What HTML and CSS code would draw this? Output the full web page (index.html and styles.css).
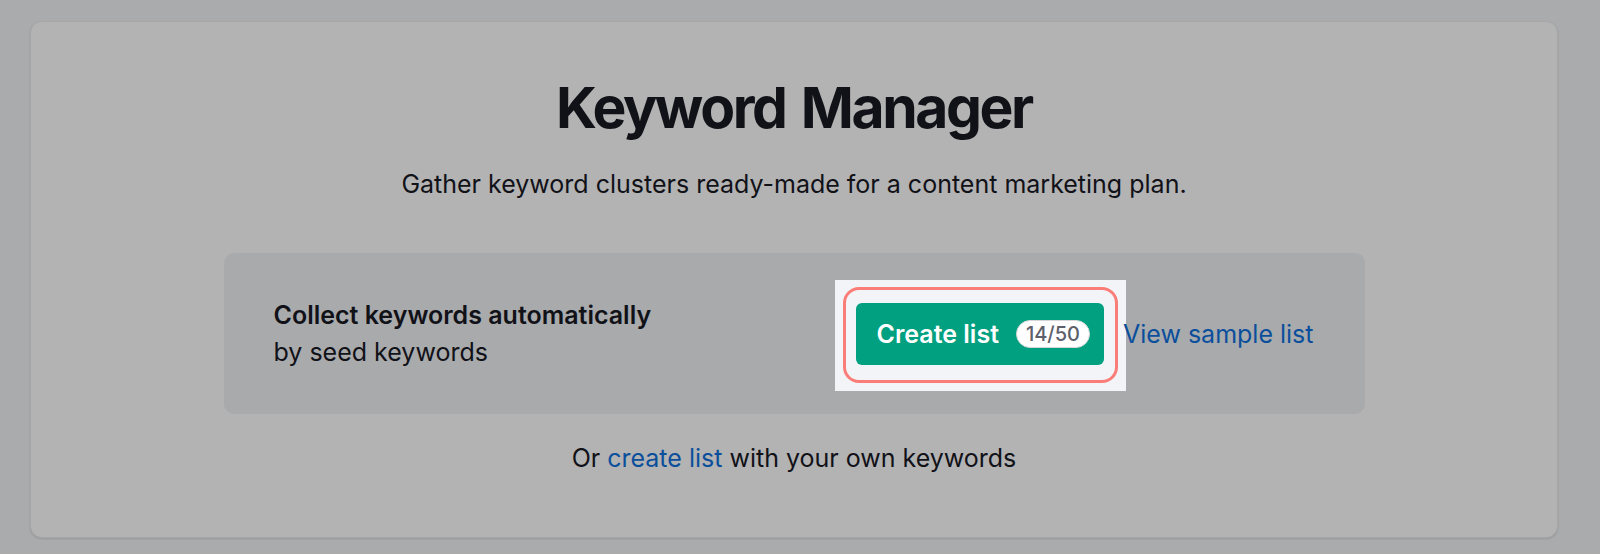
FILE: index.html
```html
<!DOCTYPE html>
<html lang="en">
<head>
<meta charset="utf-8">
<title>Keyword Manager</title>
<link rel="stylesheet" href="styles.css">
</head>
<body>
  <main class="card">
    <h1 class="title">Keyword Manager</h1>
    <p class="subtitle">Gather keyword clusters ready-made for a content marketing plan.</p>
    <section class="panel">
      <div class="panel-text">
        <div class="panel-head">Collect keywords automatically</div>
        <div class="panel-sub">by seed keywords</div>
      </div>
      <div class="panel-actions">
        <div class="annot">
          <button class="btn" type="button">Create list <span class="badge">14/50</span></button>
        </div>
        <a class="link" href="#">View sample list</a>
      </div>
    </section>
    <p class="footer-text">Or <a class="link" href="#">create list</a> with your own keywords</p>
  </main>
</body>
</html>
```

FILE: styles.css
```css
html, body {
  margin: 0;
  padding: 0;
}
body {
  background: #aaabad;
  font-family: Inter, "Noto Sans", "Liberation Sans", sans-serif;
  color: #111118;
  padding: 21px 42px 0 30px;
  height: 554px;
  box-sizing: border-box;
}
.card {
  box-sizing: border-box;
  width: 1528px;
  height: 517px;
  background: #b3b3b3;
  border: 1px solid #a7a7a8;
  border-radius: 12px;
  box-shadow: 0 1px 2px rgba(0, 0, 0, 0.12);
  display: flex;
  flex-direction: column;
  align-items: center;
  padding-top: 50px;
}
.title {
  margin: 0;
  font-size: 57px;
  line-height: 72px;
  font-weight: 700;
  letter-spacing: -2.4px;
  word-spacing: 4px;
  color: #111118;
}
.subtitle {
  margin: 22px 0 0;
  font-size: 25px;
  line-height: 36px;
  font-weight: 400;
}
.panel {
  box-sizing: border-box;
  margin-top: 51px;
  width: 1141px;
  height: 161px;
  background: #a9aaac;
  border-radius: 10px;
  display: flex;
  align-items: center;
  justify-content: space-between;
  padding: 0 51px 0 50px;
}
.panel-text {
  font-size: 25px;
  line-height: 37px;
}
.panel-head {
  font-weight: 600;
}
.panel-actions {
  display: flex;
  align-items: center;
}
.annot {
  position: relative;
}
.annot::before {
  content: "";
  position: absolute;
  top: -23px;
  bottom: -26px;
  left: -21px;
  right: -22px;
  background: #f3f4f8;
}
.annot::after {
  content: "";
  position: absolute;
  top: -16px;
  bottom: -18px;
  left: -13px;
  right: -14px;
  border: 3px solid #fa7d77;
  border-radius: 16px;
  box-sizing: border-box;
}
.btn {
  position: relative;
  z-index: 1;
  display: flex;
  align-items: center;
  gap: 17px;
  height: 62px;
  padding: 0 14px 0 20px;
  border: none;
  border-radius: 6px;
  background: #00a081;
  color: #ffffff;
  font-family: inherit;
  font-size: 25px;
  font-weight: 600;
  cursor: pointer;
}
.badge {
  display: inline-flex;
  align-items: center;
  justify-content: center;
  box-sizing: border-box;
  width: 74px;
  height: 28px;
  border-radius: 14px;
  background: #ffffff;
  border: 1.5px solid #d5d6d8;
  color: #5d5f6b;
  font-size: 20px;
  font-weight: 500;
}
.link {
  color: #0b4f9c;
  text-decoration: none;
}
.panel-actions .link {
  position: relative;
  margin-left: 19px;
  font-size: 25px;
  line-height: 36px;
}
.footer-text {
  margin: 26px 0 0;
  font-size: 25px;
  line-height: 36px;
}
```
